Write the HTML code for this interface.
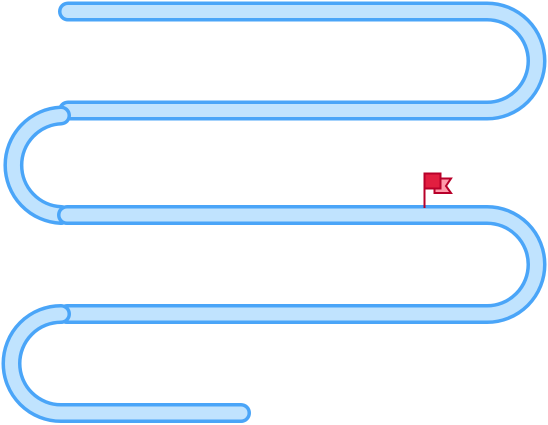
<!DOCTYPE html>
<html><head><style>html,body{margin:0;padding:0;background:#fff;}svg{display:block}</style></head>
<body>
<svg width="548" height="425" viewBox="0 0 548 425" xmlns="http://www.w3.org/2000/svg">
<g fill="none" stroke-linecap="round" stroke-linejoin="round">
  <g>
    <path d="M68 11.5 H487 A49.5 49.5 0 0 1 487 110.5 H68" stroke="#4aa5f8" stroke-width="20"/>
    <path d="M68 11.5 H487 A49.5 49.5 0 0 1 487 110.5 H68" stroke="#c0e3fe" stroke-width="13"/>
  </g>
  <g>
    <path d="M61 115.5 A49.8 49.8 0 0 0 61 215" stroke="#4aa5f8" stroke-width="20"/>
    <path d="M61 115.5 A49.8 49.8 0 0 0 61 215" stroke="#c0e3fe" stroke-width="13"/>
  </g>
  <g>
    <path d="M67 215 H487 A49.5 49.5 0 0 1 487 314 H67" stroke="#4aa5f8" stroke-width="20"/>
    <path d="M67 215 H487 A49.5 49.5 0 0 1 487 314 H67" stroke="#c0e3fe" stroke-width="13"/>
  </g>
  <g>
    <path d="M61 314 A49.5 49.5 0 0 0 61 413 H241" stroke="#4aa5f8" stroke-width="20"/>
    <path d="M61 314 A49.5 49.5 0 0 0 61 413 H241" stroke="#c0e3fe" stroke-width="13"/>
  </g>
</g>
<path d="M434.5 178.5 H451 L446 186 L451 193 H434.5 Z" fill="#ff9aab" stroke="#b8002a" stroke-width="2" stroke-linejoin="miter"/>
<rect x="424.5" y="173.5" width="16" height="15" fill="#e21e40" stroke="#b8002a" stroke-width="2"/>
<line x1="424.5" y1="173" x2="424.5" y2="208" stroke="#b8002a" stroke-width="2"/>
</svg>
</body></html>
